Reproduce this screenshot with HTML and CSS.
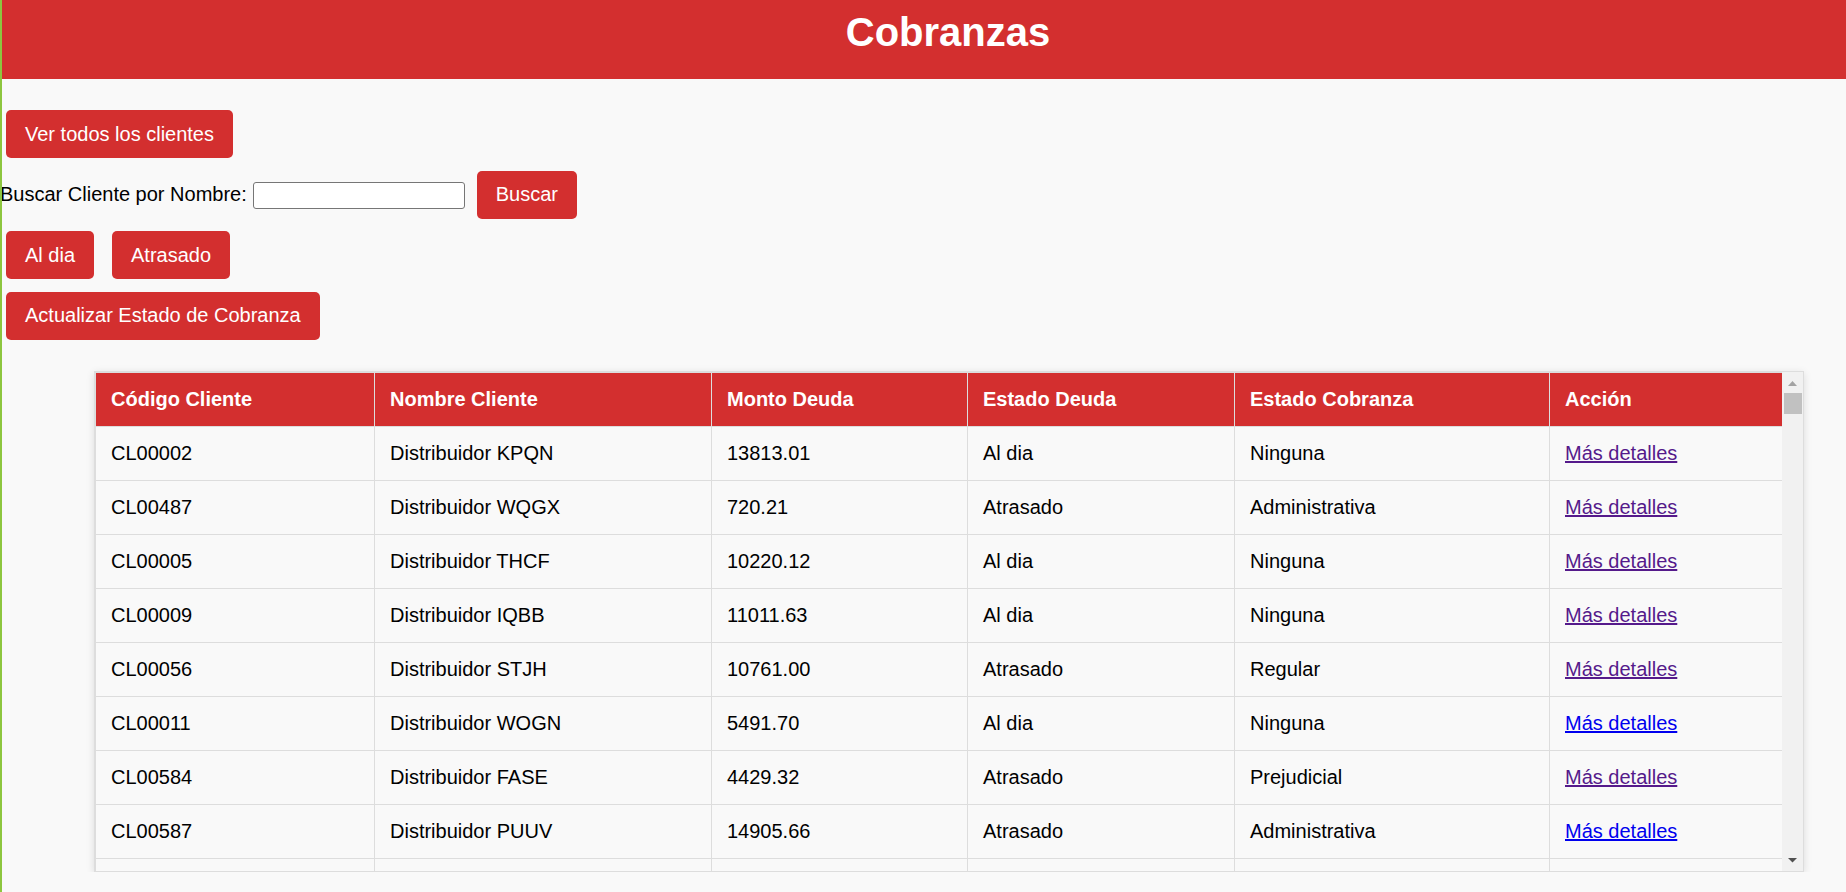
FILE: index.html
```html
<!DOCTYPE html>
<html lang="es">
<head>
<meta charset="utf-8">
<title>Cobranzas</title>
<link rel="stylesheet" href="styles.css">
</head>
<body>
<header class="topbar"><h1 class="title">Cobranzas</h1></header>
<section class="controls">
  <div class="row row-indent"><button class="btn">Ver todos los clientes</button></div>
  <div class="row row-search">
    <label class="label" for="q">Buscar Cliente por Nombre:</label>
    <input id="q" class="input" type="text">
    <button class="btn btn-search">Buscar</button>
  </div>
  <div class="row row-indent row-filters"><button class="btn">Al dia</button><button class="btn">Atrasado</button></div>
  <div class="row row-indent"><button class="btn">Actualizar Estado de Cobranza</button></div>
</section>
<div class="table-wrap">
  <div class="table-view">
    <table class="grid">
      <colgroup>
        <col class="c1"><col class="c2"><col class="c3"><col class="c4"><col class="c5"><col class="c6">
      </colgroup>
      <thead>
        <tr><th>Código Cliente</th><th>Nombre Cliente</th><th>Monto Deuda</th><th>Estado Deuda</th><th>Estado Cobranza</th><th>Acción</th></tr>
      </thead>
      <tbody>
        <tr><td>CL00002</td><td>Distribuidor KPQN</td><td>13813.01</td><td>Al dia</td><td>Ninguna</td><td><a class="link visited" href="#">Más detalles</a></td></tr>
        <tr><td>CL00487</td><td>Distribuidor WQGX</td><td>720.21</td><td>Atrasado</td><td>Administrativa</td><td><a class="link visited" href="#">Más detalles</a></td></tr>
        <tr><td>CL00005</td><td>Distribuidor THCF</td><td>10220.12</td><td>Al dia</td><td>Ninguna</td><td><a class="link visited" href="#">Más detalles</a></td></tr>
        <tr><td>CL00009</td><td>Distribuidor IQBB</td><td>11011.63</td><td>Al dia</td><td>Ninguna</td><td><a class="link visited" href="#">Más detalles</a></td></tr>
        <tr><td>CL00056</td><td>Distribuidor STJH</td><td>10761.00</td><td>Atrasado</td><td>Regular</td><td><a class="link visited" href="#">Más detalles</a></td></tr>
        <tr><td>CL00011</td><td>Distribuidor WOGN</td><td>5491.70</td><td>Al dia</td><td>Ninguna</td><td><a class="link" href="#">Más detalles</a></td></tr>
        <tr><td>CL00584</td><td>Distribuidor FASE</td><td>4429.32</td><td>Atrasado</td><td>Prejudicial</td><td><a class="link visited" href="#">Más detalles</a></td></tr>
        <tr><td>CL00587</td><td>Distribuidor PUUV</td><td>14905.66</td><td>Atrasado</td><td>Administrativa</td><td><a class="link" href="#">Más detalles</a></td></tr>
        <tr class="row-empty"><td></td><td></td><td></td><td></td><td></td><td></td></tr>
      </tbody>
    </table>
  </div>
  <div class="scrollbar" aria-hidden="true">
    <div class="sb-btn">
      <svg width="21" height="21" viewBox="0 0 21 21"><path d="M6 14 L10.5 9 L15 14 Z" fill="#a3a3a3"/></svg>
    </div>
    <div class="sb-thumb"></div>
    <div class="sb-track"></div>
    <div class="sb-btn">
      <svg width="21" height="21" viewBox="0 0 21 21"><path d="M6 8 L10.5 12.5 L15 8 Z" fill="#505050"/></svg>
    </div>
  </div>
</div>
</body>
</html>
```

FILE: styles.css
```css
html, body {
  margin: 0;
  padding: 0;
}
body {
  background: #f9f9f9;
  font-family: "Liberation Sans", Arial, sans-serif;
  font-size: 20px;
  line-height: 23px;
  color: #000;
  overflow: hidden;
}
body::before {
  content: "";
  position: fixed;
  left: 0;
  top: 0;
  bottom: 0;
  width: 2px;
  background: #8dc63f;
  z-index: 10;
}
.topbar {
  background: #d32f2f;
  color: #fff;
  padding: 9px 0 24px 50px;
  text-align: center;
}
.title {
  margin: 0;
  font-size: 40px;
  line-height: 46px;
  font-weight: bold;
}
.controls {
  display: flex;
  flex-direction: column;
  gap: 12.5px;
  margin-top: 31px;
}
.row {
  display: flex;
  align-items: center;
}
.row-indent {
  padding-left: 6px;
}
.row-filters {
  gap: 18px;
}
.btn {
  font-family: "Liberation Sans", Arial, sans-serif;
  font-size: 20px;
  line-height: 23px;
  background: #d32f2f;
  color: #fff;
  border: none;
  border-radius: 5px;
  padding: 12.5px 19px;
  margin: 0;
  cursor: pointer;
}
.label {
  white-space: nowrap;
}
.input {
  box-sizing: border-box;
  width: 212px;
  height: 27px;
  margin: 1px 0 0 6px;
  border: 1px solid #767676;
  border-radius: 3px;
  background: #fff;
  padding: 1px 3px;
}
.btn-search {
  margin-left: 12px;
}
.table-wrap {
  display: flex;
  margin: 31px 0 0 94px;
  width: 1708px;
  height: 499px;
  border: 1px solid #ddd;
  box-shadow: 0 2px 8px rgba(0, 0, 0, 0.12);
}
.table-view {
  flex: 1;
  overflow: hidden;
}
.grid {
  width: 1688px;
  table-layout: fixed;
  border-collapse: collapse;
}
.c1 { width: 279px; }
.c2 { width: 337px; }
.c3 { width: 256px; }
.c4 { width: 267px; }
.c5 { width: 315px; }
.c6 { width: 234px; }
.grid th,
.grid td {
  border: 1px solid #ddd;
  padding: 15px;
  height: 23px;
  text-align: left;
  white-space: nowrap;
  overflow: hidden;
}
.grid th {
  background: #d32f2f;
  color: #fff;
  font-weight: bold;
}
.link {
  color: #0000ee;
  text-decoration: underline;
}
.link.visited {
  color: #551a8b;
}
.scrollbar {
  width: 21px;
  flex: none;
  display: flex;
  flex-direction: column;
  background: #f1f1f1;
}
.sb-btn {
  height: 21px;
  flex: none;
}
.sb-btn svg {
  display: block;
}
.sb-thumb {
  height: 21px;
  margin: 0 1px 0 2px;
  background: #c1c1c1;
  flex: none;
}
.sb-track {
  flex: 1;
}
```
